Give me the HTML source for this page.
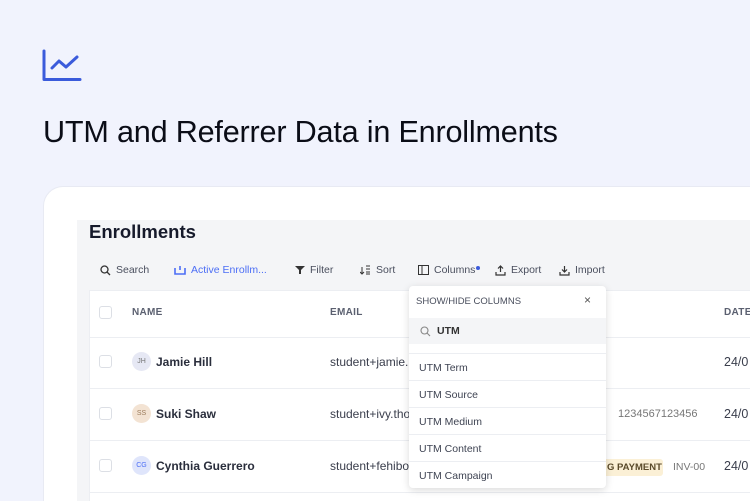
<!DOCTYPE html>
<html style="width:750px;height:501px;overflow:hidden"><head><meta charset="utf-8"><style>
*{box-sizing:border-box;margin:0;padding:0}
body{width:750px;height:501px;overflow:hidden;background:#f1f3fd;font-family:"Liberation Sans",sans-serif;position:relative;white-space:nowrap}
.abs{position:absolute}
h1{position:absolute;left:43px;top:115px;font-size:30.6px;font-weight:400;color:#0b0d17;letter-spacing:-0.2px}
.card{left:43px;top:186px;width:740px;height:315px;background:#fff;border-radius:20px 0 0 0;border:1px solid #e8eaf3;border-bottom:none;border-right:none}
.panel{left:77px;top:220px;width:673px;height:281px;background:#f4f5f7}
.title{left:89px;top:221px;font-size:18.5px;font-weight:700;color:#161a2b}
.tb{top:264px;font-size:10.5px;color:#4a4f5e;display:flex;align-items:center;gap:5px}
.table{left:89px;top:290px;width:661px;height:211px;background:#fff;border:1px solid #eceef2;border-right:none;border-bottom:none}
.hdr{font-size:10px;font-weight:700;color:#5b6070;letter-spacing:.3px}
.cb{width:13px;height:13px;border:1px solid #dcdfe5;border-radius:3px;background:#fff}
.line{left:90px;width:660px;height:1px;background:#eceef2}
.av{width:19px;height:19px;border-radius:50%;font-size:7px;display:flex;align-items:center;justify-content:center}
.nm{font-size:12px;font-weight:700;color:#2a2e3c}
.em{font-size:12px;color:#3a3e4c}
.dd{left:409px;top:286px;width:197px;height:202px;background:#fff;border-radius:4px;box-shadow:0 2px 8px rgba(0,0,0,.15)}
.it{position:absolute;left:0;width:197px;height:26px;background:#fff;border-top:1px solid #eceef2;font-size:10.5px;color:#3e4352;padding:8px 10px}
</style></head><body>
<svg class="abs" style="left:40px;top:47px" width="44" height="40" viewBox="40 47 44 40"><path d="M44 51V79.5H80" fill="none" stroke="#3b5bdb" stroke-width="3" stroke-linecap="round" stroke-linejoin="round"/><path d="M52 68L59 61L66 67L77 57" fill="none" stroke="#3b5bdb" stroke-width="3" stroke-linecap="round" stroke-linejoin="round"/></svg>
<h1>UTM and Referrer Data in Enrollments</h1>
<div class="abs card"></div>
<div class="abs panel"></div>
<div class="abs title">Enrollments</div>
<div class="abs tb" style="left:100px"><svg width="11" height="11"><circle cx="4.5" cy="4.5" r="3.5" fill="none" stroke="#333" stroke-width="1.3"/><path d="M7 7L10 10" stroke="#333" stroke-width="1.3"/></svg>Search</div>
<div class="abs tb" style="left:174px;color:#4c6ef5"><svg width="12" height="10"><path d="M1 3V9H11V3M6 1V5" fill="none" stroke="#4c6ef5" stroke-width="1.6"/></svg>Active Enrollm...</div>
<div class="abs tb" style="left:295px"><svg width="10" height="10"><path d="M0 1H10L6 5V9H4V5Z" fill="#333"/></svg>Filter</div>
<div class="abs tb" style="left:360px"><svg width="11" height="10"><path d="M2 2V9M0 7L2 9L4 7M6 1H10M6 4H10M6 7H10M6 9H10" stroke="#333" fill="none"/></svg>Sort</div>
<div class="abs tb" style="left:418px"><svg width="11" height="10"><rect x=".5" y=".5" width="10" height="9" fill="none" stroke="#333"/><path d="M4 1V9" stroke="#333"/></svg>Columns<span style="width:4px;height:4px;border-radius:50%;background:#3b5bdb;margin-left:-4px;margin-top:-5px"></span></div>
<div class="abs tb" style="left:495px"><svg width="11" height="11"><path d="M5.5 1V7M3 3.5L5.5 1L8 3.5M1 7V10H10V7" stroke="#333" fill="none" stroke-width="1.2"/></svg>Export</div>
<div class="abs tb" style="left:559px"><svg width="11" height="11"><path d="M5.5 1V7M3 4.5L5.5 7L8 4.5M1 7V10H10V7" stroke="#333" fill="none" stroke-width="1.2"/></svg>Import</div>
<div class="abs table"></div>
<div class="abs cb" style="left:99px;top:306px"></div>
<div class="abs hdr" style="left:132px;top:307px">NAME</div>
<div class="abs hdr" style="left:330px;top:307px">EMAIL</div>
<div class="abs hdr" style="left:724px;top:307px">DATE</div>
<div class="abs line" style="top:337px"></div>
<div class="abs line" style="top:388px"></div>
<div class="abs line" style="top:440px"></div>
<div class="abs line" style="top:492px"></div>
<div class="abs cb" style="left:99px;top:355px"></div>
<div class="abs av" style="left:132px;top:352px;background:#e6e8f4;color:#777">JH</div>
<div class="abs nm" style="left:156px;top:355px">Jamie Hill</div>
<div class="abs em" style="left:330px;top:355px">student+jamie.l</div>
<div class="abs em" style="left:724px;top:355px;font-size:12.5px">24/0</div>
<div class="abs cb" style="left:99px;top:407px"></div>
<div class="abs av" style="left:132px;top:404px;background:#f3e3d3;color:#9a7a5a">SS</div>
<div class="abs nm" style="left:156px;top:407px">Suki Shaw</div>
<div class="abs em" style="left:330px;top:407px">student+ivy.tho</div>
<div class="abs em" style="left:618px;top:408px;font-size:11px;color:#777">1234567123456</div>
<div class="abs em" style="left:724px;top:407px;font-size:12.5px">24/0</div>
<div class="abs cb" style="left:99px;top:459px"></div>
<div class="abs av" style="left:132px;top:456px;background:#dfe5fb;color:#4c6ef5">CG</div>
<div class="abs nm" style="left:156px;top:459px">Cynthia Guerrero</div>
<div class="abs em" style="left:330px;top:459px">student+fehibo</div>
<div class="abs" style="left:595px;top:459px;width:68px;height:17px;background:#fbf0d6;border-radius:3px;font-size:9.5px;font-weight:700;color:#5a4a2a;padding:3px 0 0 12px">G PAYMENT</div>
<div class="abs em" style="left:673px;top:461px;font-size:10.5px;color:#777">INV-00</div>
<div class="abs em" style="left:724px;top:459px;font-size:12.5px">24/0</div>
<div class="abs dd">
<div class="abs" style="left:7px;top:10px;font-size:9.5px;color:#4a4f5e">SHOW/HIDE COLUMNS</div>
<div class="abs" style="left:175px;top:7px;font-size:12px;color:#555">×</div>
<div class="abs" style="left:0;top:32px;width:197px;height:26px;background:#f4f5f7;font-size:10.5px;font-weight:700;color:#333;padding:7px 0 0 28px">UTM</div>
<svg class="abs" style="left:11px;top:40px" width="11" height="11"><circle cx="4.5" cy="4.5" r="3.5" fill="none" stroke="#888" stroke-width="1.1"/><path d="M7 7L10 10" stroke="#888" stroke-width="1.1"/></svg>
<div class="it" style="top:67px">UTM Term</div>
<div class="it" style="top:94px">UTM Source</div>
<div class="it" style="top:121px">UTM Medium</div>
<div class="it" style="top:148px">UTM Content</div>
<div class="it" style="top:175px;border-radius:0 0 4px 4px">UTM Campaign</div>
</div>
</body></html>
